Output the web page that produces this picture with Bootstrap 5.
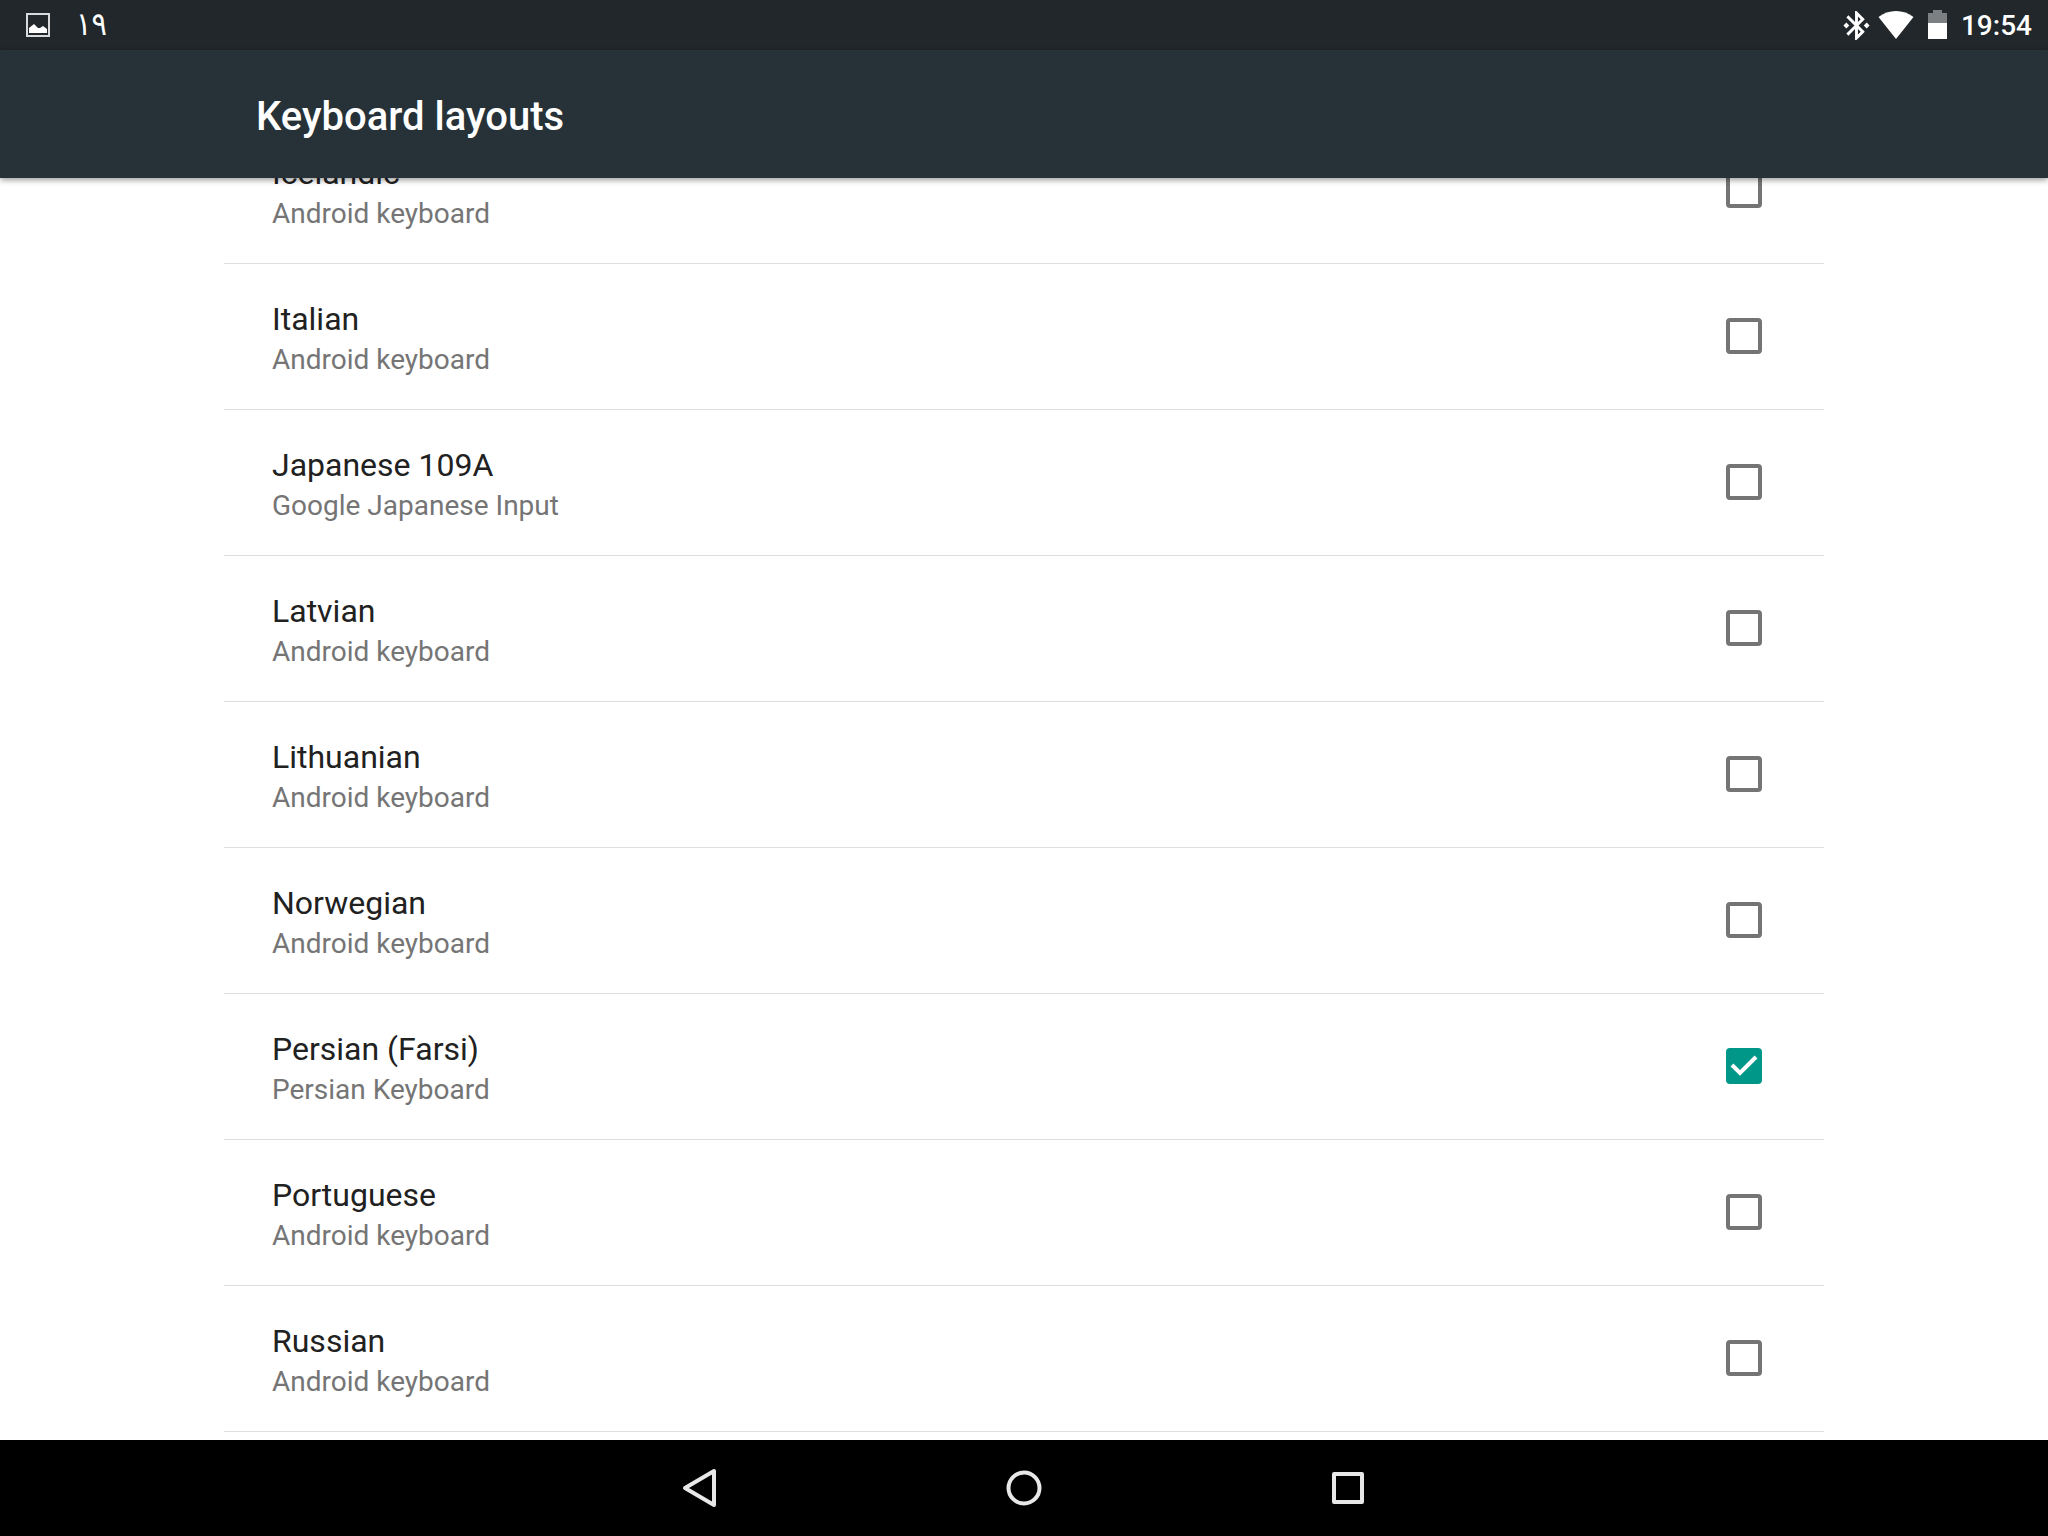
<!DOCTYPE html>
<html lang="en">
<head>
<meta charset="utf-8">
<meta name="viewport" content="width=device-width, initial-scale=1">
<title>Keyboard layouts</title>
<link href="https://cdn.jsdelivr.net/npm/bootstrap@5.3.0/dist/css/bootstrap.min.css" rel="stylesheet">
<style>
body { font-family: Roboto, sans-serif; background: #fff; color: #212121; }
.status-bar { height: 50px; background: #21272b; color: #fff; padding: 0 16px 0 24px; }
.status-icons { gap: 14px; }
.clock-text { font-size: 28px; line-height: 32px; font-weight: 500; padding-top: 2px; }
.note-text { font-family: "DejaVu Sans Condensed", "DejaVu Sans", sans-serif; font-size: 32px; line-height: 32px; padding-bottom: 2px; }
.app-bar { height: 128px; background: #263238; color: #fff; z-index: 2; box-shadow: 0 2px 6px rgba(0,0,0,.4); }
.page-col { width: 100%; max-width: 1600px; margin: 0 auto; }
.app-title { font-size: 40px; line-height: 48px; font-weight: 500; padding: 6px 32px 0; }
.layout-list { margin-top: -60px; }
.layout-row { min-height: 146px; padding: 0 62px 2px 48px; border-bottom: 1px solid #dedede; cursor: pointer; }
.layout-text { padding-top: 4px; }
.layout-name { font-size: 32px; line-height: 44px; }
.layout-source { font-size: 28px; line-height: 38px; color: #757575; }
.form-check-input.layout-check { width: 36px; height: 36px; margin: 0; border: 4px solid #757575; border-radius: 4px; background-color: #fff; }
.form-check-input.layout-check:checked { background-color: #009688; border-color: #009688;
  background-size: 36px 36px; background-origin: border-box;
  background-image: url("data:image/svg+xml,%3Csvg xmlns='http://www.w3.org/2000/svg' viewBox='0 0 36 36'%3E%3Cpath d='M6 17l8 8L30 9' fill='none' stroke='%23fff' stroke-width='4'/%3E%3C/svg%3E"); }
.nav-keys { height: 96px; background: #000; gap: 228px; }
.nav-key { width: 96px; height: 96px; }
</style>
</head>
<body>
<div class="d-flex flex-column vh-100 overflow-hidden">
  <div class="status-bar d-flex align-items-center justify-content-between flex-shrink-0">
    <div class="d-flex align-items-center gap-4">
      <svg width="28" height="28" viewBox="0 0 28 28" aria-hidden="true"><path d="M3 3h22v22H3z" fill="none" stroke="#d8dadb" stroke-width="2"/><path d="M5 22v-5l5-4 4 4h2l3-2 4 3v4z" fill="#fff"/></svg>
      <span class="note-text" lang="fa">۱۹</span>
    </div>
    <div class="status-icons d-flex align-items-center">
      <div class="d-flex align-items-center gap-2">
        <svg width="27" height="29" viewBox="3 2 18 20" aria-hidden="true"><path fill="#fff" d="M7 12l-2-2-2 2 2 2 2-2zm10.710-4.290L12 2h-1v7.590L6.410 5 5 6.410 10.590 12 5 17.590 6.410 19 11 14.410V22h1l5.710-5.710-4.300-4.290 4.300-4.290zM13 5.830l1.880 1.880L13 9.590V5.830zm1.880 10.460L13 18.170v-3.760l1.880 1.880zM19 10l-2 2 2 2 2-2-2-2z"/></svg>
        <svg width="36" height="30" viewBox="0 0 36 30" aria-hidden="true"><path d="M0.500 7C10-1 26-1 35.500 7L18 29z" fill="#fff"/></svg>
      </div>
      <svg width="19" height="30" viewBox="0 0 19 30" aria-hidden="true"><path d="M0 3h5V0h9v3h5v10H0z" fill="#7d8082"/><path d="M0 13h19v16H0z" fill="#fff"/></svg>
      <span class="clock-text">19:54</span>
    </div>
  </div>
  <header class="app-bar d-flex align-items-center flex-shrink-0 position-relative">
    <div class="page-col"><h1 class="app-title m-0">Keyboard layouts</h1></div>
  </header>
  <main class="flex-grow-1 overflow-hidden">
    <div class="page-col">
      <div class="layout-list">
        <label class="layout-row d-flex align-items-center justify-content-between"><span class="layout-text"><span class="layout-name d-block">Icelandic</span><span class="layout-source d-block">Android keyboard</span></span><input class="form-check-input layout-check" type="checkbox"></label>
        <label class="layout-row d-flex align-items-center justify-content-between"><span class="layout-text"><span class="layout-name d-block">Italian</span><span class="layout-source d-block">Android keyboard</span></span><input class="form-check-input layout-check" type="checkbox"></label>
        <label class="layout-row d-flex align-items-center justify-content-between"><span class="layout-text"><span class="layout-name d-block">Japanese 109A</span><span class="layout-source d-block">Google Japanese Input</span></span><input class="form-check-input layout-check" type="checkbox"></label>
        <label class="layout-row d-flex align-items-center justify-content-between"><span class="layout-text"><span class="layout-name d-block">Latvian</span><span class="layout-source d-block">Android keyboard</span></span><input class="form-check-input layout-check" type="checkbox"></label>
        <label class="layout-row d-flex align-items-center justify-content-between"><span class="layout-text"><span class="layout-name d-block">Lithuanian</span><span class="layout-source d-block">Android keyboard</span></span><input class="form-check-input layout-check" type="checkbox"></label>
        <label class="layout-row d-flex align-items-center justify-content-between"><span class="layout-text"><span class="layout-name d-block">Norwegian</span><span class="layout-source d-block">Android keyboard</span></span><input class="form-check-input layout-check" type="checkbox"></label>
        <label class="layout-row d-flex align-items-center justify-content-between"><span class="layout-text"><span class="layout-name d-block">Persian (Farsi)</span><span class="layout-source d-block">Persian Keyboard</span></span><input class="form-check-input layout-check" type="checkbox" checked></label>
        <label class="layout-row d-flex align-items-center justify-content-between"><span class="layout-text"><span class="layout-name d-block">Portuguese</span><span class="layout-source d-block">Android keyboard</span></span><input class="form-check-input layout-check" type="checkbox"></label>
        <label class="layout-row d-flex align-items-center justify-content-between"><span class="layout-text"><span class="layout-name d-block">Russian</span><span class="layout-source d-block">Android keyboard</span></span><input class="form-check-input layout-check" type="checkbox"></label>
      </div>
    </div>
  </main>
  <nav class="nav-keys d-flex align-items-center justify-content-center flex-shrink-0" aria-label="System navigation">
    <button type="button" class="nav-key btn border-0 p-0" aria-label="Back"><svg width="48" height="48" viewBox="0 0 48 48"><path d="M38 7v34L9 24z" fill="none" stroke="#e8e8e8" stroke-width="4" stroke-linejoin="round"/></svg></button>
    <button type="button" class="nav-key btn border-0 p-0" aria-label="Home"><svg width="48" height="48" viewBox="0 0 48 48"><circle cx="24" cy="24" r="15.5" fill="none" stroke="#e8e8e8" stroke-width="4"/></svg></button>
    <button type="button" class="nav-key btn border-0 p-0" aria-label="Recent apps"><svg width="48" height="48" viewBox="0 0 48 48"><path d="M10 10h28v28H10z" fill="none" stroke="#e8e8e8" stroke-width="4" stroke-linejoin="round"/></svg></button>
  </nav>
</div>
<script src="https://cdn.jsdelivr.net/npm/bootstrap@5.3.0/dist/js/bootstrap.bundle.min.js"></script>
</body>
</html>
